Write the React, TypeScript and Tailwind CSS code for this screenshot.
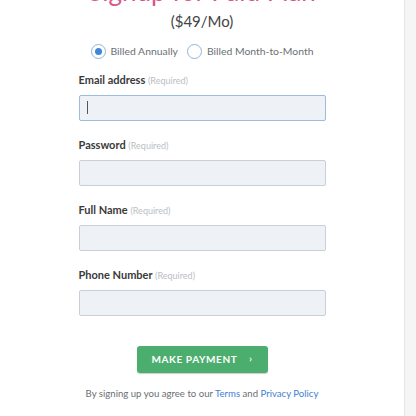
import React from "react";

const fields = [
  { label: "Email address", focused: true },
  { label: "Password" },
  { label: "Full Name" },
  { label: "Phone Number" },
];

function Radio({ checked, label }: { checked?: boolean; label: string }) {
  return (
    <label className="flex items-center gap-[5px]">
      <span className="flex h-[15px] w-[15px] items-center justify-center rounded-full border border-[#8fb3dc] bg-white">
        {checked && <span className="h-[7px] w-[7px] rounded-full bg-[#3f86d6]" />}
      </span>
      <span className="text-[10.4px] text-[#6b6f74]">{label}</span>
    </label>
  );
}

export default function App() {
  return (
    <div className="flex h-[416px] w-[416px] overflow-hidden bg-white font-['Lato',sans-serif]">
      <div className="flex flex-1 flex-col items-center">
        <h1 className="mt-[-22px] text-[26px] leading-[26px] text-[#d9558a]">Signup for Paid Plan</h1>
        <div className="mt-[8px] text-[15px] leading-[18px] text-[#444]">($49/Mo)</div>

        <div className="mt-[14px] flex items-center gap-[9px]">
          <Radio checked label="Billed Annually" />
          <Radio label="Billed Month-to-Month" />
        </div>

        <form className="mt-[13px] flex w-[247px] flex-col gap-[17px]">
          {fields.map((f) => (
            <div key={f.label} className="flex flex-col gap-[7px]">
              <div className="text-[11px] font-bold leading-[14px] text-[#3a3a3a]">
                {f.label} <span className="text-[9px] font-normal text-[#b9bec4]">(Required)</span>
              </div>
              <div
                className={
                  "flex h-[26px] items-center rounded-[2px] border bg-[#eef2f6] px-[7px] " +
                  (f.focused ? "border-[#9dbbe0]" : "border-[#c7cfd8]")
                }
              >
                {f.focused && <span className="h-[13px] w-px bg-[#555]" />}
              </div>
            </div>
          ))}
        </form>

        <button className="mt-[30px] flex h-[27px] w-[131px] items-center justify-center gap-[12px] rounded-[3px] bg-[#4cae6e] text-[10px] font-bold tracking-[0.06em] text-white shadow-[0_1px_1px_rgba(0,0,0,0.2)]">
          MAKE PAYMENT <span className="text-[9px]">›</span>
        </button>

        <p className="mt-[14px] text-[9.6px] text-[#6b6f74]">
          By signing up you agree to our <span className="text-[#3f7fcf]">Terms</span> and{" "}
          <span className="text-[#3f7fcf]">Privacy Policy</span>
        </p>
      </div>
      <div className="w-[12px] border-l border-[#e6e6e6] bg-[#f5f5f5]" />
    </div>
  );
}
